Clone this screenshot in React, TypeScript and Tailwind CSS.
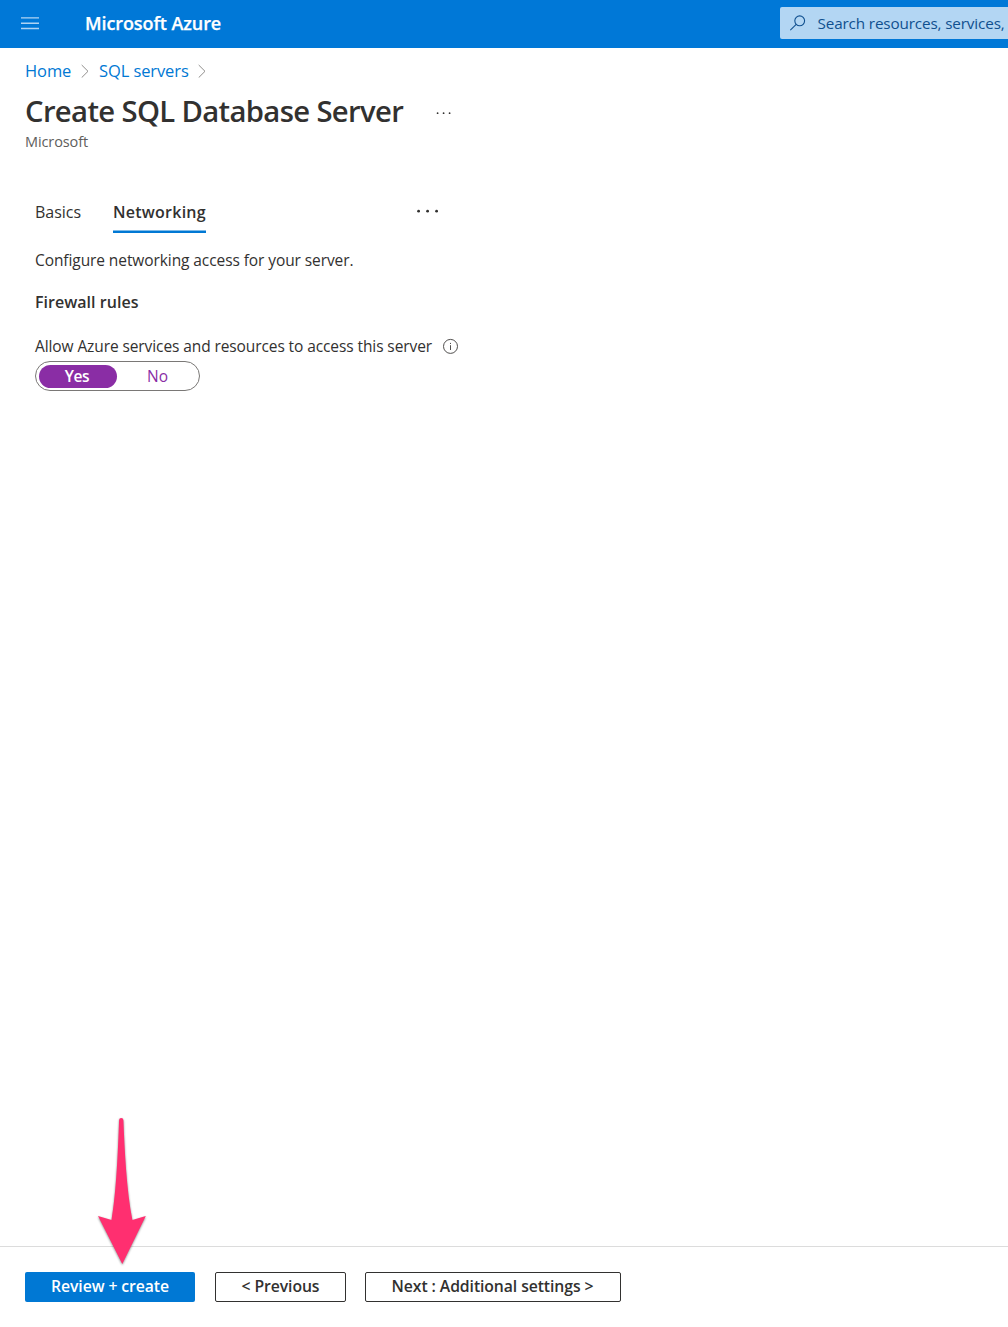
import React from "react";

function MenuIcon() {
  return (
    <svg width="18" height="14" viewBox="0 0 18 14" fill="none" stroke="#b0d4f3" strokeWidth="1.4">
      <path d="M0 1.9H18M0 7.2H18M0 12.5H18" />
    </svg>
  );
}

function SearchIcon() {
  return (
    <svg width="16" height="16" viewBox="0 0 16 16" fill="none" stroke="#10508f" strokeWidth="1.1">
      <circle cx="9.7" cy="5.8" r="4.9" />
      <path d="M6.2 9.3L0.3 15.2" />
    </svg>
  );
}

function Chevron() {
  return (
    <svg width="8" height="14" viewBox="0 0 8 14" fill="none" stroke="#8f8d8b" strokeWidth="1">
      <path d="M0.7 1L7 7.3L0.7 13.6" />
    </svg>
  );
}

function InfoIcon() {
  return (
    <svg width="16" height="16" viewBox="0 0 16 16" fill="none" stroke="#484644" strokeWidth="0.95">
      <circle cx="7.5" cy="8.4" r="7" />
      <path d="M7.5 7.2V12" />
      <path d="M7.5 4.9V6" />
    </svg>
  );
}

function Dots({ gap, r }: { gap: number; r: number }) {
  return (
    <svg width={gap * 2 + 4} height="4" viewBox={`0 0 ${gap * 2 + 4} 4`} fill="#323130">
      <circle cx="2.6" cy="2.2" r={r} />
      <circle cx={2.6 + gap} cy="2.2" r={r} />
      <circle cx={2.6 + gap * 2} cy="2.2" r={r} />
    </svg>
  );
}

function PointerArrow() {
  return (
    <svg
      className="pointer-events-none absolute left-[90px] -top-[137px] drop-shadow-[0_1px_1px_rgba(0,0,0,0.45)]"
      width="64"
      height="160"
      viewBox="90 1110 64 160"
    >
      <path
        d="M119.1 1120Q119.2 1118 121.2 1118Q123.3 1118 123.4 1120C124.6 1150 126.5 1190 132.4 1220L145.8 1216L122.3 1264L98 1216L111.5 1220C116.4 1192 118 1150 119.1 1120Z"
        fill="#ff2f70"
      />
    </svg>
  );
}

export default function App() {
  return (
    <div className="flex h-[1327px] w-[1008px] flex-col overflow-hidden bg-white font-['Open_Sans','Noto_Sans',sans-serif] text-[15.5px] tracking-[-0.085px] whitespace-nowrap text-[#323130]">
      <header className="flex h-12 shrink-0 items-center justify-between bg-[#0078d7] pl-[21px]">
        <div className="flex items-center gap-[46px] pb-[2px]">
          <button aria-label="Menu" className="flex">
            <MenuIcon />
          </button>
          <span className="text-[18px] leading-6 font-semibold tracking-[-0.09px] text-white [-webkit-text-stroke:0.25px_white]">
            Microsoft Azure
          </span>
        </div>
        <div className="mb-[2px] flex h-8 w-[228px] items-center gap-[11.5px] rounded-l-[2px] bg-[#b3d6f3] pl-[10px]">
          <span className="shrink-0">
            <SearchIcon />
          </span>
          <span className="text-[15.25px] tracking-[-0.135px] text-[#10508f]">Search resources, services,</span>
        </div>
      </header>

      <nav className="flex h-[46px] shrink-0 items-center pl-[25px] text-[16.5px] tracking-[-0.1px] text-[#0078d4]">
        <a className="w-[56px]">Home</a>
        <Chevron />
        <a className="ml-[10px] w-[99px]">SQL servers</a>
        <Chevron />
      </nav>

      <div className="flex h-[33px] shrink-0 items-center pl-[25px]">
        <h1 className="w-[410px] pt-[2px] text-[29.25px] leading-[33px] font-semibold tracking-[-0.65px]">Create SQL Database Server</h1>
        <span className="pt-[5px]">
          <Dots gap={6} r={0.9} />
        </span>
      </div>
      <p className="h-[29px] shrink-0 pl-[25px] text-[14.5px] leading-[29px] tracking-[-0.11px] text-[#605e5c]">Microsoft</p>

      <main className="flex grow flex-col items-start pt-10 pl-[35px]">
        <div className="flex h-[37px] items-start text-base leading-8">
          <span className="w-[78px] tracking-[-0.03px]">Basics</span>
          <span className="h-[37px] w-[93px] border-b-2 border-[#0078d4] font-semibold tracking-[0.24px] shadow-[inset_0_-1px_0_#80bce9]">Networking</span>
          <span className="ml-[210px] flex h-[30px] items-center">
            <Dots gap={9} r={1.4} />
          </span>
        </div>
        <p className="mt-[14px] leading-[26px]">Configure networking access for your server.</p>
        <h2 className="mt-4 text-base leading-[26px] font-semibold tracking-[0.03px]">Firewall rules</h2>
        <div className="mt-[18px] flex h-[26px] items-center">
          <span className="w-[408px] pt-[2px] tracking-[-0.097px]">Allow Azure services and resources to access this server</span>
          <InfoIcon />
        </div>
        <div className="mt-[2px] flex h-[30px] w-[165px] items-center rounded-full border border-[#7a7876] pl-[3px]">
          <span className="flex h-[23px] w-[78px] items-center justify-center rounded-full bg-[#8a2da5] pt-[2px] pr-[2px] font-semibold tracking-[-0.4px] text-white">
            Yes
          </span>
          <span className="w-[81px] pt-[2px] text-center text-[#8a2da5]">No</span>
        </div>
      </main>

      <footer className="relative flex h-[81px] shrink-0 items-start border-t border-[#dcdcdc] pt-[25px] pl-[25px] text-[15.75px] font-semibold tracking-[-0.085px]">
        <button className="h-[30px] w-[170px] rounded-[2px] bg-[#0078d4] text-white">Review + create</button>
        <button className="ml-5 h-[30px] w-[131px] rounded-[2px] border border-[#323130]">&lt; Previous</button>
        <button className="ml-[19px] h-[30px] w-[256px] rounded-[2px] border border-[#323130] pr-px">Next : Additional settings &gt;</button>
        <PointerArrow />
      </footer>
    </div>
  );
}
